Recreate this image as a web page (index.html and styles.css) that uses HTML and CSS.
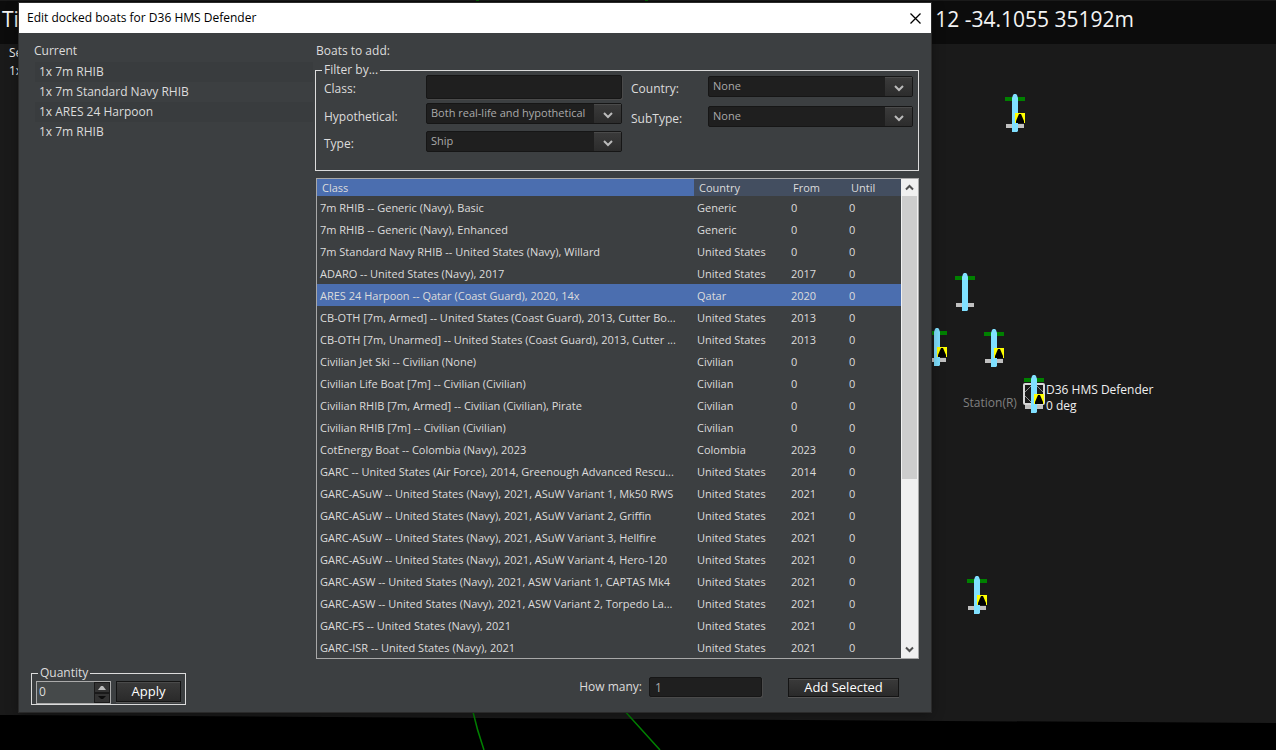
FILE: index.html
```html
<!DOCTYPE html>
<html lang="en">

<head>
  <meta charset="utf-8">
  <title>Edit docked boats for D36 HMS Defender</title>
  <meta name="viewport" content="width=device-width, initial-scale=1">
  <link rel="stylesheet" href="styles.css">
</head>

<body>

<svg class="map" aria-hidden="true">
  <defs>
    <g id="ship">
      <rect x="0" y="3" width="20" height="4" fill="#008000"/>
      <rect x="1" y="30" width="18" height="4" fill="#c0c0c0"/>
      <path d="M7 38V4l1-3 1-1h2l1 1 1 3v33l-1 1z" fill="#80e0ff"/>
    </g>
    <g id="flag">
      <rect x="10" y="19" width="10" height="10" fill="#ffff00"/>
      <path d="M11 29v-2l3-7h2l3 7v2z" fill="#000"/>
    </g>
  </defs>
  <polygon points="0,0 2552,0 2552,732 1276,723 0,715" fill="#1a1a1a"/>
  <path d="M472 708Q477 730 484 750M622 708L660 750M476 0h3M645 0h3" fill="none" stroke="#008000" stroke-width="1.5"/>
  <use href="#ship" x="1005" y="94"/>
  <use href="#flag" x="1005" y="94"/>
  <use href="#ship" x="955" y="273"/>
  <use href="#ship" x="927" y="328"/>
  <use href="#flag" x="927" y="328"/>
  <use href="#ship" x="984" y="329"/>
  <use href="#flag" x="984" y="329"/>
  <use href="#ship" x="967" y="576"/>
  <use href="#flag" x="967" y="576"/>
  <!-- selected unit -->
  <use href="#ship" x="1024" y="375"/>
  <rect x="1025" y="403" width="18" height="6" fill="#c0c0c0"/>
  <path d="M1034 383l11 11-11 11-11-11z" fill="none" stroke="#909090"/>
  <rect x="1024" y="384" width="20" height="20" rx="1" fill="none" stroke="#d8d8d8" stroke-width="2"/>
  <path d="M1031 382h6v30h-6z" fill="#80e0ff"/>
  <use href="#flag" x="1024" y="375"/>
  <text x="963" y="407" class="map-text map-text_dim">Station(R)</text>
  <text x="1046" y="394" class="map-text">D36 HMS Defender</text>
  <text x="1046" y="410" class="map-text">0 deg</text>
</svg>

<header class="status">
  <span>Ti</span>
  <span>12 -34.1055 35192m</span>
</header>
<div class="side-info">Se<br>1x</div>

<main class="dialog" role="dialog" aria-labelledby="dialog-title">
  <div class="dialog__bar">
    <h1 id="dialog-title">Edit docked boats for D36 HMS Defender</h1>
    <button type="button" class="close" aria-label="Close">
      <svg width="11" height="11" viewBox="0 0 11 11"><path d="M.5.5l10 10M10.500.500l-10 10" stroke="#000" stroke-width="1.3" fill="none"/></svg>
    </button>
  </div>

  <div class="dialog__body">
    <section class="current">
      <h2>Current</h2>
      <ul>
        <li>1x 7m RHIB</li>
        <li>1x 7m Standard Navy RHIB</li>
        <li>1x ARES 24 Harpoon</li>
        <li>1x 7m RHIB</li>
      </ul>
      <fieldset class="quantity">
        <legend>Quantity</legend>
        <div class="spinner">
          <input type="text" inputmode="numeric" value="0" aria-label="Quantity">
          <div class="spinner__buttons">
            <button type="button" aria-label="Increase"><svg width="8" height="5" viewBox="0 0 8 5"><path d="M0 5l3-4h2l3 4z" fill="#bbb"/></svg></button>
            <button type="button" aria-label="Decrease"><svg width="8" height="5" viewBox="0 0 8 5"><path d="M0 1h8l-3 3H3z" fill="#0c0c0c"/></svg></button>
          </div>
        </div>
        <button type="button" class="button button_apply">Apply</button>
      </fieldset>
    </section>

    <section class="add">
      <h2>Boats to add:</h2>
      <fieldset class="filter">
        <legend>Filter by...</legend>
        <div class="filter__left">
          <label for="class">Class:</label>
          <input type="text" id="class" class="field">
          <label for="hypothetical">Hypothetical:</label>
          <div class="combo">
            <select id="hypothetical"><option>Both real-life and hypothetical</option></select>
            <span class="combo__arrow"><svg width="10" height="7" viewBox="0 0 10 7"><path d="M1 1l4 4 4-4" fill="none" stroke="#bbb" stroke-width="2"/></svg></span>
          </div>
          <label for="type">Type:</label>
          <div class="combo">
            <select id="type"><option>Ship</option></select>
            <span class="combo__arrow"><svg width="10" height="7" viewBox="0 0 10 7"><path d="M1 1l4 4 4-4" fill="none" stroke="#bbb" stroke-width="2"/></svg></span>
          </div>
        </div>
        <div class="filter__right">
          <label for="country">Country:</label>
          <div class="combo">
            <select id="country"><option>None</option></select>
            <span class="combo__arrow"><svg width="10" height="7" viewBox="0 0 10 7"><path d="M1 1l4 4 4-4" fill="none" stroke="#bbb" stroke-width="2"/></svg></span>
          </div>
          <label for="subtype">SubType:</label>
          <div class="combo">
            <select id="subtype"><option>None</option></select>
            <span class="combo__arrow"><svg width="10" height="7" viewBox="0 0 10 7"><path d="M1 1l4 4 4-4" fill="none" stroke="#bbb" stroke-width="2"/></svg></span>
          </div>
        </div>
      </fieldset>

      <div class="grid">
        <table>
          <colgroup>
            <col>
            <col class="col-country">
            <col class="col-from">
            <col class="col-until">
          </colgroup>
          <thead>
            <tr><th class="sorted">Class</th><th>Country</th><th>From</th><th>Until</th></tr>
          </thead>
          <tbody>
            <tr><td>7m RHIB -- Generic (Navy), Basic</td><td>Generic</td><td>0</td><td>0</td></tr>
            <tr><td>7m RHIB -- Generic (Navy), Enhanced</td><td>Generic</td><td>0</td><td>0</td></tr>
            <tr><td>7m Standard Navy RHIB -- United States (Navy), Willard</td><td>United States</td><td>0</td><td>0</td></tr>
            <tr><td>ADARO -- United States (Navy), 2017</td><td>United States</td><td>2017</td><td>0</td></tr>
            <tr class="selected"><td>ARES 24 Harpoon -- Qatar (Coast Guard), 2020, 14x</td><td>Qatar</td><td>2020</td><td>0</td></tr>
            <tr><td>CB-OTH [7m, Armed] -- United States (Coast Guard), 2013, Cutter Bo...</td><td>United States</td><td>2013</td><td>0</td></tr>
            <tr><td>CB-OTH [7m, Unarmed] -- United States (Coast Guard), 2013, Cutter ...</td><td>United States</td><td>2013</td><td>0</td></tr>
            <tr><td>Civilian Jet Ski -- Civilian (None)</td><td>Civilian</td><td>0</td><td>0</td></tr>
            <tr><td>Civilian Life Boat [7m] -- Civilian (Civilian)</td><td>Civilian</td><td>0</td><td>0</td></tr>
            <tr><td>Civilian RHIB [7m, Armed] -- Civilian (Civilian), Pirate</td><td>Civilian</td><td>0</td><td>0</td></tr>
            <tr><td>Civilian RHIB [7m] -- Civilian (Civilian)</td><td>Civilian</td><td>0</td><td>0</td></tr>
            <tr><td>CotEnergy Boat -- Colombia (Navy), 2023</td><td>Colombia</td><td>2023</td><td>0</td></tr>
            <tr><td>GARC -- United States (Air Force), 2014, Greenough Advanced Rescu...</td><td>United States</td><td>2014</td><td>0</td></tr>
            <tr><td>GARC-ASuW -- United States (Navy), 2021, ASuW Variant 1, Mk50 RWS</td><td>United States</td><td>2021</td><td>0</td></tr>
            <tr><td>GARC-ASuW -- United States (Navy), 2021, ASuW Variant 2, Griffin</td><td>United States</td><td>2021</td><td>0</td></tr>
            <tr><td>GARC-ASuW -- United States (Navy), 2021, ASuW Variant 3, Hellfire</td><td>United States</td><td>2021</td><td>0</td></tr>
            <tr><td>GARC-ASuW -- United States (Navy), 2021, ASuW Variant 4, Hero-120</td><td>United States</td><td>2021</td><td>0</td></tr>
            <tr><td>GARC-ASW -- United States (Navy), 2021, ASW Variant 1, CAPTAS Mk4</td><td>United States</td><td>2021</td><td>0</td></tr>
            <tr><td>GARC-ASW -- United States (Navy), 2021, ASW Variant 2, Torpedo La...</td><td>United States</td><td>2021</td><td>0</td></tr>
            <tr><td>GARC-FS -- United States (Navy), 2021</td><td>United States</td><td>2021</td><td>0</td></tr>
            <tr><td>GARC-ISR -- United States (Navy), 2021</td><td>United States</td><td>2021</td><td>0</td></tr>
          </tbody>
        </table>
        <div class="scroll">
          <button type="button" aria-label="Scroll up"><svg width="9" height="7" viewBox="0 0 9 7"><path d="M1 5.500l3.500-3.500L8 5.500" fill="none" stroke="#505050" stroke-width="2"/></svg></button>
          <div class="scroll__track"><div class="scroll__thumb"></div></div>
          <button type="button" aria-label="Scroll down"><svg width="9" height="7" viewBox="0 0 9 7"><path d="M1 1.500L4.500 5 8 1.500" fill="none" stroke="#505050" stroke-width="2"/></svg></button>
        </div>
      </div>

      <div class="add__footer">
        <label for="how-many">How many:</label>
        <input type="text" id="how-many" class="field field_small" value="1">
        <button type="button" class="button button_add">Add Selected</button>
      </div>
    </section>
  </div>
</main>

</body>

</html>
```
FILE: styles.css
```css
* {
  box-sizing: border-box;
}

body {
  margin: 0;
  min-height: 100vh;
  overflow: hidden;
  background: #000;
  color: #dcdcdc;
  font-family: "Open Sans", "Noto Sans", sans-serif;
  font-size: 12px;
  line-height: 16px;
}

h1, h2 {
  margin: 0;
  font-size: 12px;
  font-weight: normal;
}

button, input, select {
  font: inherit;
  color: inherit;
  margin: 0;
  padding: 0;
  border: 0;
}

svg {
  display: block;
}

/* map */

.map {
  position: absolute;
  left: 0;
  top: 0;
  width: 100%;
  height: 100%;
}

.map-text {
  fill: #f0f0f0;
  font-size: 12px;
}

.map-text_dim {
  fill: #808080;
}

.status {
  position: absolute;
  left: 0;
  right: 0;
  top: 1px;
  height: 43px;
  padding: 2px 142px 0 2px;
  display: flex;
  justify-content: space-between;
  background: #0c0c0c;
  color: #f4f4f4;
  font-size: 21px;
  line-height: 32px;
}

.side-info {
  position: absolute;
  left: 9px;
  top: 44px;
  color: #f0f0f0;
  line-height: 18px;
}

/* dialog */

.dialog {
  position: absolute;
  left: 19px;
  right: 345px;
  top: 3px;
  background: #3c3f41;
  box-shadow: 0 0 0 1px #2a2a2a, 0 2px 12px rgba(0, 0, 0, 0.4);
}

.dialog__bar {
  display: flex;
  align-items: center;
  justify-content: space-between;
  height: 30px;
  padding: 0 10px 0 8px;
  background: #fff;
  color: #000;
}

.close {
  background: none;
}

.dialog__body {
  display: grid;
  grid-template-columns: 284px 1fr;
  padding: 10px 12px 7px;
}

.current {
  display: flex;
  flex-direction: column;
}

.current h2 {
  padding-left: 3px;
}

.current ul {
  flex: 1;
  margin: 3px 2px 0 4px;
  padding: 0;
  list-style: none;
}

.current li {
  padding-left: 4px;
  line-height: 20px;
}

.current li:nth-child(odd) {
  background: #393c3e;
}

fieldset {
  min-width: 0;
  margin: 0;
  border: 1px solid #dcdcdc;
}

legend {
  padding: 0 2px;
}

.quantity {
  display: flex;
  gap: 5px;
  align-self: flex-start;
  height: 40px;
  padding: 0 4px;
}

.quantity legend {
  margin-left: 2px;
}

.spinner {
  display: flex;
  width: 75px;
  height: 23px;
  border: 1px solid #aaa;
  background: #45494a;
}

.spinner input {
  flex: 1;
  min-width: 0;
  padding: 0 0 2px 2px;
  background: none;
}

.spinner__buttons {
  display: flex;
  flex-direction: column;
  width: 16px;
}

.spinner__buttons button {
  display: flex;
  flex: 1;
  align-items: center;
  justify-content: center;
  border: 1px solid #1a1a1a;
  background: #333;
}

.button {
  border: 1px solid #141414;
  background: linear-gradient(#3a3a3a, #2a2a2a);
  box-shadow: 0 1px 0 #555, inset 0 1px 0 #4a4a4a;
  color: #fff;
  font-size: 13px;
  line-height: 16px;
  padding-bottom: 2px;
}

.button_apply {
  width: 65px;
  height: 21px;
}

.button_add {
  width: 111px;
  height: 19px;
}

.add h2 {
  padding-left: 1px;
}

.filter {
  display: flex;
  gap: 9px;
  height: 109px;
  margin-top: 3px;
  padding: 0 5px 0 8px;
}

.filter legend {
  margin-left: -2px;
}

.filter__left {
  display: grid;
  grid-template-columns: 102px 196px;
  grid-template-rows: 24px 24px 21px;
  row-gap: 4px;
  margin-top: -3px;
}

.filter__right {
  display: grid;
  flex: 1;
  grid-template-columns: 77px 1fr;
  grid-template-rows: 21px 21px;
  row-gap: 9px;
  margin-top: -2px;
}

.filter label {
  align-self: center;
  padding-top: 4px;
}

.field {
  border: 1px solid #161616;
  border-radius: 2px;
  background: #1f1f1f;
  box-shadow: 1px 1px 0 #4a4a4a;
  padding: 0 5px;
  color: #aaa;
}

.combo {
  position: relative;
  height: 21px;
}

.combo select {
  appearance: none;
  width: 100%;
  height: 100%;
  padding: 0 0 2px 4px;
  border: 1px solid #161616;
  border-radius: 2px;
  background: #1f1f1f;
  color: #aaa;
  font-size: 11px;
  line-height: 16px;
}

.combo__arrow {
  position: absolute;
  top: 1px;
  right: 1px;
  bottom: 1px;
  width: 27px;
  display: flex;
  align-items: center;
  justify-content: center;
  padding-top: 2px;
  border-top: 1px solid #4a4a4a;
  background: linear-gradient(#3a3a3a, #2c2c2c);
  pointer-events: none;
}

/* boats table */

.grid {
  display: flex;
  margin: 7px 0 18px 1px;
  border: 1px solid #a8a8a8;
}

.grid table {
  flex: 1;
  width: 100%;
  min-width: 0;
  table-layout: fixed;
  border-collapse: collapse;
  font-size: 11px;
}

.col-country {
  width: 94px;
}

.col-from {
  width: 58px;
}

.col-until {
  width: 55px;
}

.grid th {
  height: 17px;
  padding: 0 5px;
  background: #434e60;
  font-weight: normal;
  text-align: left;
}

.grid th.sorted {
  background: #4b6eaf;
}

.grid td {
  height: 22px;
  padding: 2px 0 0 3px;
  overflow: hidden;
  white-space: nowrap;
}

.selected {
  background: #4b6eaf;
}

.scroll {
  display: flex;
  flex: none;
  flex-direction: column;
  width: 17px;
  background: #f0f0f0;
}

.scroll button {
  display: flex;
  align-items: center;
  justify-content: center;
  height: 17px;
  background: none;
}

.scroll__track {
  flex: 1;
  padding: 0 1px;
}

.scroll__thumb {
  height: 283px;
  background: #cdcdcd;
}

.add__footer {
  display: flex;
  align-items: center;
  justify-content: flex-end;
  padding: 0 20px 8px 0;
}

.field_small {
  width: 113px;
  height: 20px;
  margin: 0 26px 0 7px;
}
```
